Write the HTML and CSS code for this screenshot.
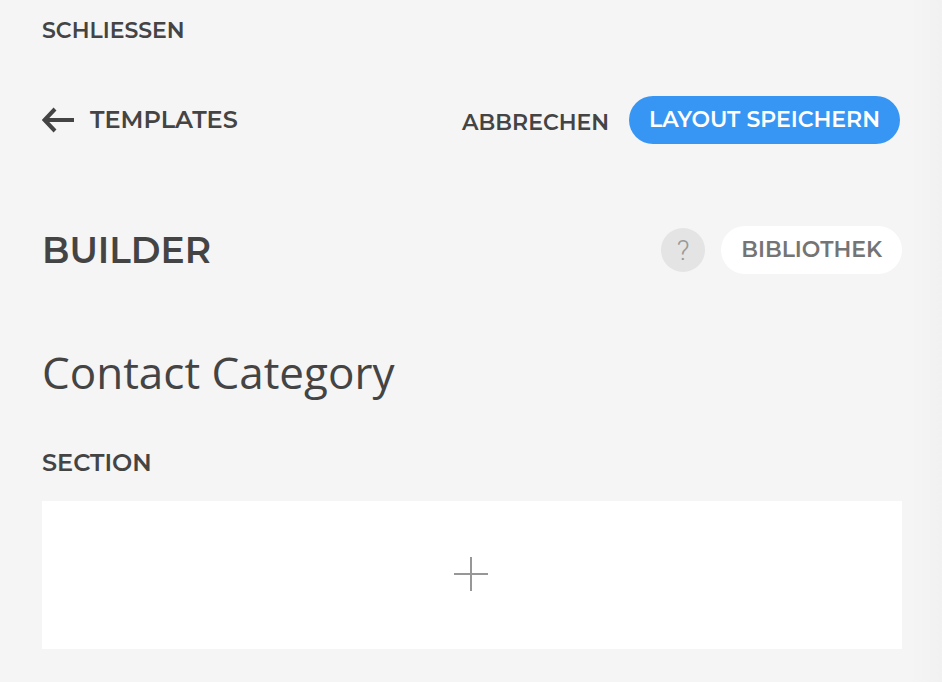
FILE: index.html
```html
<!DOCTYPE html>
<html lang="de">
<head>
<meta charset="utf-8">
<meta name="viewport" content="width=device-width, initial-scale=1">
<title>Builder</title>
<link rel="stylesheet" href="styles.css">
</head>
<body>
<div class="page">
  <button class="text-button close" type="button">SCHLIESSEN</button>
  <header class="toolbar">
    <a class="back" href="#templates">
      <svg class="back-icon" viewBox="0 0 32 26" aria-hidden="true"><path d="M13 2 2.500 13 13 24M2.500 13H32"/></svg>
      TEMPLATES
    </a>
    <div class="actions">
      <button class="text-button cancel" type="button">ABBRECHEN</button>
      <button class="pill primary" type="button">LAYOUT SPEICHERN</button>
    </div>
  </header>
  <main>
    <div class="builder-bar">
      <h1 class="builder-title">BUILDER</h1>
      <div class="builder-actions">
        <button class="help" type="button">?</button>
        <button class="pill library" type="button">BIBLIOTHEK</button>
      </div>
    </div>
    <h2 class="template-name">Contact Category</h2>
    <section>
      <h3 class="section-title">SECTION</h3>
      <button class="add" type="button" aria-label="+">
        <svg class="add-icon" viewBox="0 0 34 34" aria-hidden="true"><path d="M17 0v34M0 17h34"/></svg>
      </button>
    </section>
  </main>
</div>
</body>
</html>
```
FILE: styles.css
```css
* { box-sizing: border-box; }
body {
  margin: 0;
  min-height: 100vh;
  background: linear-gradient(to left, #f1f1f1, #f5f5f5 32px);
  color: #444;
  font-family: Montserrat, Inter, "Liberation Sans", sans-serif;
}
button { border: 0; padding: 0; background: none; color: inherit; font: inherit; cursor: pointer; }
h1, h2, h3 { margin: 0; }
.page { padding: 16px 40px 32px 42px; }
.text-button { font-size: 22px; line-height: 30px; font-weight: 600; }
.close { display: block; }
.toolbar, .builder-bar { display: flex; align-items: center; justify-content: space-between; height: 48px; }
.toolbar { margin-top: 50px; padding-right: 2px; }
.back { display: flex; align-items: center; gap: 16px; color: inherit; font-size: 24px; line-height: 32px; font-weight: 600; text-decoration: none; }
.back-icon { width: 32px; height: 26px; fill: none; stroke: currentColor; stroke-width: 4; }
.actions { display: flex; align-items: center; gap: 20px; }
.cancel { padding-top: 6px; }
.pill { height: 48px; padding: 0 20px 2px; border-radius: 24px; font-size: 22px; font-weight: 600; }
.primary { background: #3796f4; color: #fff; }
.builder-bar { margin-top: 82px; }
.builder-title { font-size: 36px; line-height: 48px; font-weight: 600; }
.builder-actions { display: flex; align-items: center; gap: 16px; }
.help { width: 44px; height: 44px; border-radius: 50%; background: #e4e4e4; color: #999; font: 300 28px Roboto, sans-serif; }
.library { background: #fff; color: #747474; }
.template-name { margin-top: 66px; font: 400 44px/64px "Open Sans", sans-serif; }
.section-title { margin-top: 43px; font-size: 24px; line-height: 32px; font-weight: 600; }
.add { display: flex; align-items: center; justify-content: center; width: 100%; height: 148px; margin-top: 22px; padding: 0 2px 2px 0; background: #fff; }
.add-icon { width: 34px; height: 34px; stroke: #979797; stroke-width: 2; }
```
